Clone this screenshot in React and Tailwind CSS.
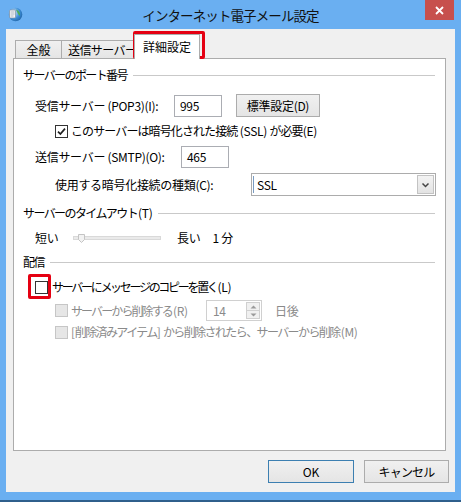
import React from "react";

const FONT = "font-['Meiryo_UI','Noto_Sans_CJK_JP',sans-serif]";

function CheckBox({ checked = false, disabled = false }) {
    return (
        <span
            className={
                "flex h-[13px] w-[13px] shrink-0 items-center justify-center border " +
                (disabled ? "border-[#c6c6c6] bg-[#e6e6e6]" : "border-[#333333] bg-white")
            }
        >
            {checked && (
                <svg width="11" height="11" viewBox="0 0 11 11">
                    <path d="M2 5.6 L4.4 8 L9 2.6" fill="none" stroke="#1f1f1f" strokeWidth="1.7" />
                </svg>
            )}
        </span>
    );
}

function SectionHeader({ children, suffix, mt }) {
    return (
        <div className={"flex h-[20px] items-center pl-[9px] pr-[10px] " + mt}>
            <span className="shrink-0">
                <span className="tracking-[-1.6px]">{children}</span>
                {suffix && <span className="ml-[1px]">{suffix}</span>}
            </span>
            <span className="ml-[6px] h-px flex-1 bg-[#c9c9c9]" />
        </div>
    );
}

function WinButton({ children, className = "", primary = false }) {
    return (
        <div
            className={
                "flex items-center justify-center border bg-gradient-to-b from-[#f0f0f0] to-[#e5e5e5] " +
                (primary ? "border-[#3c7fb1] " : "border-[#acacac] ") +
                className
            }
        >
            {children}
        </div>
    );
}

function TitleIcon() {
    return (
        <svg width="16" height="16" viewBox="0 0 16 16">
            <defs>
                <radialGradient id="g" cx="0.35" cy="0.35" r="0.8">
                    <stop offset="0" stopColor="#e8f4ff" />
                    <stop offset="0.55" stopColor="#3d8fd8" />
                    <stop offset="1" stopColor="#1b5a9a" />
                </radialGradient>
            </defs>
            <circle cx="8.5" cy="8.5" r="6.8" fill="url(#g)" />
            <path d="M9 3.5 C12 4.5 13.5 7 13 10 C11.5 9 10.5 7 9 3.5 Z" fill="#4caf50" />
            <rect x="2.5" y="4" width="6" height="8" rx="1" fill="#f5f5f5" stroke="#7a8ea3" strokeWidth="0.7" />
            <path d="M3.5 6 H7.5 M3.5 8 H7.5 M3.5 10 H6.5" stroke="#7a8ea3" strokeWidth="0.6" />
        </svg>
    );
}

export default function App() {
    return (
        <div
            className={
                "relative flex h-[502px] w-[461px] flex-col overflow-hidden bg-[#6aaff1] text-[12px] text-black " +
                FONT
            }
        >
            {/* title bar */}
            <div className="flex h-[29px] items-start">
                <div className="w-[36px] pl-[7px] pt-[6px]">
                    <TitleIcon />
                </div>
                <div className="flex-1 pt-[5px] text-center text-[13.5px] tracking-[-0.9px] text-[#111]">
                    インターネット電子メール設定
                </div>
                <div className="w-[36px]">
                    <div className="flex h-[20px] w-[29px] items-center justify-center bg-[#c7504d]">
                        <svg width="9" height="9" viewBox="0 0 9 9">
                            <path d="M1 1 L8 8 M8 1 L1 8" stroke="#ffffff" strokeWidth="1.8" />
                        </svg>
                    </div>
                </div>
            </div>

            {/* client area */}
            <div className="mx-[6px] flex h-[463px] flex-col bg-[#f0f0f0]">
                {/* tabs */}
                <div className="mt-[5px] flex h-[24px] items-end pl-[9px]">
                    <div className="flex h-[18px] w-[47px] items-center justify-center border border-b-0 border-[#acacac] bg-gradient-to-b from-[#f0f0f0] to-[#e5e5e5]">
                        全般
                    </div>
                    <div className="-ml-px flex h-[18px] w-[75px] items-center overflow-hidden whitespace-nowrap border border-b-0 border-[#acacac] bg-gradient-to-b from-[#f0f0f0] to-[#e5e5e5] pl-[6px] tracking-[-0.6px]">
                        送信サーバー
                    </div>
                    <div className="relative z-10 -mb-px -ml-[2px] flex h-[25px] w-[66px] items-center justify-center border border-b-0 border-[#acacac] bg-white pb-[1px]">
                        詳細設定
                    </div>
                </div>

                {/* panel */}
                <div className="ml-[7px] flex h-[393px] w-[433px] flex-col border border-[#acacac] bg-white tracking-[-0.3px]">
                    <SectionHeader mt="mt-[6px]">サーバーのポート番号</SectionHeader>

                    <div className="mt-[9px] flex h-[23px] items-center">
                        <span className="ml-[21px] w-[139px]">受信サーバー (POP3)(I):</span>
                        <div className="flex h-[22px] w-[48px] items-center border border-[#abadb3] pl-[5px]">
                            995
                        </div>
                        <WinButton className="ml-[14px] h-[23px] w-[84px]">標準設定(D)</WinButton>
                    </div>

                    <div className="mt-[4px] flex h-[20px] items-center">
                        <span className="ml-[41px]">
                            <CheckBox checked />
                        </span>
                        <span className="ml-[3px]">
                            <span className="tracking-[-0.9px]">このサーバーは暗号化された接続</span> (SSL){" "}
                            <span className="tracking-[-0.9px]">が必要</span>(E)
                        </span>
                    </div>

                    <div className="mt-[5px] flex h-[22px] items-center">
                        <span className="ml-[21px] w-[146px]">送信サーバー (SMTP)(O):</span>
                        <div className="flex h-[22px] w-[48px] items-center border border-[#abadb3] pl-[5px]">
                            465
                        </div>
                    </div>

                    <div className="mt-[5px] flex h-[23px] items-center">
                        <span className="ml-[41px] w-[196px]">使用する暗号化接続の種類(C):</span>
                        <div className="flex h-[23px] w-[185px] items-center border border-[#acacac] bg-white">
                            <span className="ml-[1px] h-[17px] w-px bg-[#7a9cc2]" />
                            <span className="ml-[3px] flex-1">SSL</span>
                            <div className="mr-px flex h-[19px] w-[17px] items-center justify-center border border-[#c3c3c3] bg-gradient-to-b from-[#f3f3f3] to-[#e3e3e3]">
                                <svg width="9" height="6" viewBox="0 0 9 6">
                                    <path d="M1.5 1.5 L4.5 4.5 L7.5 1.5" fill="none" stroke="#444" strokeWidth="1.5" />
                                </svg>
                            </div>
                        </div>
                    </div>

                    <SectionHeader mt="mt-[7px]" suffix="(T)">
                        サーバーのタイムアウト
                    </SectionHeader>

                    <div className="mt-[5px] flex h-[20px] items-center">
                        <span className="ml-[21px] w-[38px]">短い</span>
                        <svg width="88" height="12" viewBox="0 0 88 12">
                            <rect x="0.5" y="4.5" width="87" height="3" fill="#eaeaea" stroke="#d9d9d9" />
                            <path d="M5.5 2.5 H11.5 V7.5 L8.5 10.5 L5.5 7.5 Z" fill="#f2f2f2" stroke="#c4c4c4" />
                        </svg>
                        <span className="ml-[16px]">長い</span>
                        <span className="ml-[12px]">1 分</span>
                    </div>

                    <SectionHeader mt="mt-[4px]">配信</SectionHeader>

                    <div className="mt-[5px] flex h-[20px] items-center">
                        <span className="ml-[21px]">
                            <CheckBox />
                        </span>
                        <span className="ml-[4px]">
                            <span className="tracking-[-2.3px]">サーバーにメッセージのコピーを置く</span>
                            <span className="ml-[1px]">(L)</span>
                        </span>
                    </div>

                    <div className="mt-[3px] flex h-[21px] items-center text-[#8a8a8a]">
                        <span className="ml-[41px]">
                            <CheckBox disabled />
                        </span>
                        <span className="ml-[3px] w-[135px]">
                            <span className="tracking-[-1.9px]">サーバーから削除する</span>
                            <span className="ml-[1px]">(R)</span>
                        </span>
                        <div className="flex h-[21px] w-[56px] items-center border border-[#d0d0d0]">
                            <span className="flex-1 pl-[6px] text-[#8a8a8a]">14</span>
                            <div className="mr-px flex h-[17px] w-[14px] flex-col border border-[#d0d0d0] bg-[#f0f0f0]">
                                <div className="flex flex-1 items-center justify-center border-b border-[#d0d0d0]">
                                    <svg width="7" height="4" viewBox="0 0 7 4">
                                        <path d="M0.5 3.5 L3.5 0.5 L6.5 3.5 Z" fill="#9a9a9a" />
                                    </svg>
                                </div>
                                <div className="flex flex-1 items-center justify-center">
                                    <svg width="7" height="4" viewBox="0 0 7 4">
                                        <path d="M0.5 0.5 L3.5 3.5 L6.5 0.5 Z" fill="#9a9a9a" />
                                    </svg>
                                </div>
                            </div>
                        </div>
                        <span className="ml-[13px]">日後</span>
                    </div>

                    <div className="mt-[1px] flex h-[20px] items-center text-[#8a8a8a]">
                        <span className="ml-[41px]">
                            <CheckBox disabled />
                        </span>
                        <span className="ml-[3px]">
                            [<span className="tracking-[-1.6px]">削除済みアイテム</span>]{" "}
                            <span className="tracking-[-1.6px]">から削除されたら、サーバーから削除</span>
                            <span className="ml-[1px]">(M)</span>
                        </span>
                    </div>
                </div>

                {/* buttons */}
                <div className="mt-[9px] flex justify-end pr-[6px]">
                    <WinButton primary className="h-[23px] w-[86px]">
                        OK
                    </WinButton>
                    <WinButton className="ml-[10px] h-[23px] w-[85px] tracking-[-0.8px]">キャンセル</WinButton>
                </div>
            </div>

            <div className="mt-[8px] h-[2px] bg-[#2f5f8c]" />

            {/* red annotation boxes */}
            <div className="absolute left-[133px] top-[31px] h-[28px] w-[72px] rounded-[2px] border-[3px] border-[#e50012]" />
            <div className="absolute left-[28px] top-[274px] h-[25px] w-[23px] rounded-[2px] border-[3px] border-[#e50012]" />
        </div>
    );
}
